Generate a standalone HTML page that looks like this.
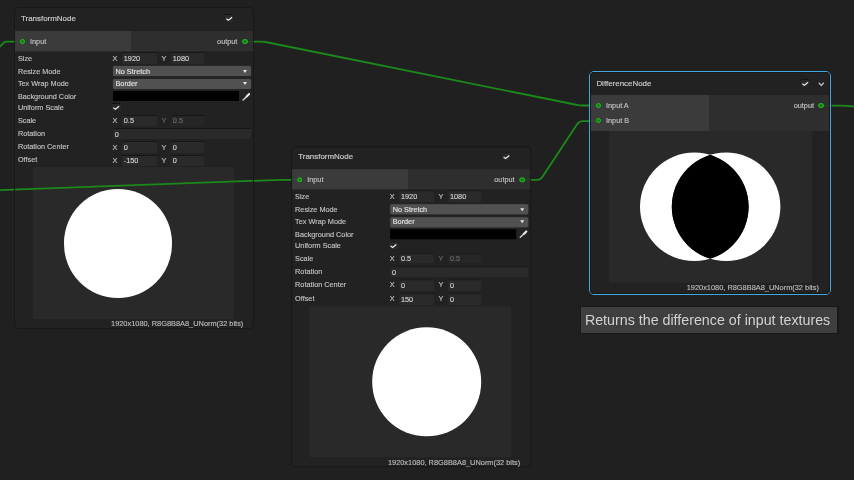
<!DOCTYPE html>
<html>
<head>
<meta charset="utf-8">
<title>Node Graph</title>
<style>
*{box-sizing:border-box;margin:0;padding:0}
html,body{width:854px;height:480px;overflow:hidden;background:#202020}
body{font-family:"Liberation Sans",sans-serif;font-size:7.3px;color:#c4c4c4;position:relative}
#stage{position:absolute;left:0;top:0;width:854px;height:480px;overflow:hidden;background:#202020;filter:blur(.3px)}
.abs{position:absolute}
svg{display:block;overflow:visible}
.t{position:absolute;white-space:nowrap;line-height:10px;height:10px}
.t,.fld,.dd{-webkit-text-stroke:.14px currentColor}
.node{position:absolute;background:#222222;border:1px solid #181818;border-radius:4px}
.wrap{position:absolute;left:0;top:0;width:0;height:0}
.title{font-size:7.95px;color:#d0d0d0}
.lbl{font-size:7.3px;color:#c2c2c2}
.dis{color:#686868}
.cap{font-size:7.4px;color:#bcbcbc}
.chk{position:absolute;width:8.5px;height:8.2px;background:#292929;border-top:1px solid #131313;border-radius:1px}
.chk svg{margin-top:-1px}
.portrow{position:absolute;left:0;right:0;height:20px;background:#2e2e2e}
.portrow .in{position:absolute;left:0;top:0;width:116px;height:100%;background:#3b3b3b}
.portsub{position:absolute;left:0;right:0;height:1px;background:#252525}
.portsub .in{position:absolute;left:0;top:0;width:116px;height:100%;background:#2d2d2d}
.dot{position:absolute;width:5.4px;height:5.4px;border-radius:50%;background:#118011;border:1.45px solid #20c220}
.fld{position:absolute;background:#2a2a2a;border-top:1px solid #161616;border-radius:1.5px;color:#d2d2d2;font-size:7.3px;line-height:10px;padding-left:1.8px;padding-top:.6px;white-space:nowrap;overflow:hidden}
.dd{position:absolute;background:#515151;border-radius:1.5px;color:#e4e4e4;font-size:7.3px;line-height:12px;padding-left:2.5px;white-space:nowrap;overflow:hidden;box-shadow:0 0 0 .6px #2c2c2c}
.dd:after{content:"";position:absolute;right:3.6px;top:var(--at,3.4px);border-left:2.4px solid transparent;border-right:2.4px solid transparent;border-top:3.4px solid #e6e6e6}
.prev{position:absolute;background:#292929;overflow:hidden}
.circ{position:absolute;border-radius:50%;background:#fff}
.tip{position:absolute;left:580.5px;top:306.5px;width:256px;height:26px;background:#3f3f3f;box-shadow:0 0 0 .9px #191919, 1.2px 0 0 .4px #141414;color:#d2d2d2;font-size:14.25px;line-height:27px;padding-left:4.4px;white-space:nowrap}
</style>
</head>
<body>
<div id="stage">
<svg class="abs" style="left:0;top:0" width="854" height="480" viewBox="0 0 854 480" fill="none" stroke="#1b891b" stroke-width="1.8" stroke-linejoin="round">
  <path d="M-2 48.4 L4.2 42.3 Q5 41.6 6.2 41.6 L14 41.6"/>
  <path d="M254 41.6 L261.5 41.6 Q263.5 41.6 265.5 42 L577.5 105 Q579.5 105.5 581.5 105.5 L589 105.5"/>
  <path d="M531 179.8 L537.5 179.8 Q540.5 179.8 542.2 177.3 L577.6 123.6 Q579.4 121.1 582.4 121.1 L589 121.1"/>
  <path d="M831.5 105.6 L840 105.7 Q847 105.9 856 106.7"/>
</svg>
<!-- TransformNode 1 -->
<div class="node" style="left:14px;top:7px;width:240px;height:321.5px;background:rgba(34,34,34,.88)">
  <div class="t title" style="left:6.0px;top:5.9px">TransformNode</div>
  <div class="chk" style="left:209.8px;top:5.8px"><svg width="8.5" height="8.2" viewBox="0 0 8.5 8.2"><path d="M1.4 4.7 L3.4 6.2 L7.1 3.2" fill="none" stroke="#ececec" stroke-width="1.25"/></svg></div>
  <div class="portrow" style="top:23px"><div class="in"></div></div>
  <div class="portsub" style="top:43px"><div class="in"></div></div>
  <div class="dot" style="left:4.7px;top:31px"></div>
  <div class="t lbl" style="left:15.0px;top:28.7px">Input</div>
  <div class="t lbl" style="right:15.6px;top:28.7px">output</div>
  <div class="dot" style="left:227.4px;top:31px"></div>
  <div class="t lbl" style="left:2.9px;top:45.7px">Size</div>
  <div class="t lbl" style="left:97.6px;top:45.7px">X</div>
  <div class="fld" style="left:107px;top:44.3px;width:35px;height:11.3px">1920</div>
  <div class="t lbl" style="left:146.4px;top:45.7px">Y</div>
  <div class="fld" style="left:156px;top:44.3px;width:33px;height:11.3px">1080</div>
  <div class="t lbl" style="left:2.9px;top:58.9px">Resize Mode</div>
  <div class="dd" style="left:98px;top:58.1px;width:138px;height:10px;--at:3.8px">No Stretch</div>
  <div class="t lbl" style="left:2.9px;top:71.4px">Tex Wrap Mode</div>
  <div class="dd" style="left:98px;top:71.2px;width:138px;height:9.5px;line-height:9px;--at:2.8px">Border</div>
  <div class="t lbl" style="left:2.9px;top:83.6px">Background Color</div>
  <div class="abs" style="left:97.5px;top:83px;width:126.3px;height:9.8px;background:#000"></div>
  <div class="abs" style="left:226.5px;top:83.5px;width:9px;height:9px"><svg width="9" height="9" viewBox="0 0 9 9"><path d="M1.1 8.0 L7.0 2.2" stroke="#cfcfcf" stroke-width="1.5" stroke-linecap="round"/><path d="M4.6 4.6 L7.1 2.1" stroke="#e4e4e4" stroke-width="2.1" stroke-linecap="round"/></svg></div>
  <div class="t lbl" style="left:2.9px;top:95.3px">Uniform Scale</div>
  <div class="chk" style="left:97.3px;top:95.3px"><svg width="8.5" height="8.2" viewBox="0 0 8.5 8.2"><path d="M1.4 4.7 L3.4 6.2 L7.1 3.2" fill="none" stroke="#ececec" stroke-width="1.25"/></svg></div>
  <div class="t lbl" style="left:2.9px;top:107.6px">Scale</div>
  <div class="t lbl" style="left:97.6px;top:107.7px">X</div>
  <div class="fld" style="left:107px;top:107.0px;width:35px;height:10.5px;padding-top:0">0.5</div>
  <div class="t lbl dis" style="left:146.4px;top:107.7px">Y</div>
  <div class="fld" style="left:156px;top:107.0px;width:33px;height:10.5px;color:#6c6c6c;background:#262626;padding-top:0">0.5</div>
  <div class="t lbl" style="left:2.9px;top:121.1px">Rotation</div>
  <div class="fld" style="left:98px;top:120.3px;width:138px;height:10.8px;padding-top:.6px">0</div>
  <div class="t lbl" style="left:2.9px;top:134.3px">Rotation Center</div>
  <div class="t lbl" style="left:97.6px;top:134.5px">X</div>
  <div class="fld" style="left:107px;top:132.9px;width:35px;height:12.1px;padding-top:1.6px">0</div>
  <div class="t lbl" style="left:146.4px;top:134.5px">Y</div>
  <div class="fld" style="left:156px;top:132.9px;width:33px;height:12.1px;padding-top:1.6px">0</div>
  <div class="t lbl" style="left:2.9px;top:147.4px">Offset</div>
  <div class="t lbl" style="left:97.6px;top:147.5px">X</div>
  <div class="fld" style="left:107px;top:146.5px;width:35px;height:11.8px">-150</div>
  <div class="t lbl" style="left:146.4px;top:147.5px">Y</div>
  <div class="fld" style="left:156px;top:146.5px;width:33px;height:11.8px">0</div>
  <div class="prev" style="left:18px;top:159.2px;width:201.4px;height:152.2px"><div class="circ" style="left:30.7px;top:21.8px;width:108.6px;height:108.6px"></div></div>
  <div class="t cap" style="right:9.7px;top:311.1px">1920x1080, R8G8B8A8_UNorm(32 bits)</div>
</div>
<svg class="abs" style="left:0;top:0" width="854" height="480" viewBox="0 0 854 480" fill="none" stroke="#1b891b" stroke-width="1.8" stroke-linejoin="round"><path d="M-2 190.2 L281 179.8 L291.4 179.8"/><path d="M14.5 180 V200 M253.5 170 V190" stroke="#181818" stroke-width="1"/></svg>
<!-- TransformNode 2 -->
<div class="wrap" style="transform:translate(277.2px,138.3px)">
<div class="node" style="left:14px;top:8.3px;width:240px;height:320.6px">
  <div class="t title" style="left:6.0px;top:5.2px">TransformNode</div>
  <div class="chk" style="left:209.8px;top:4.5px"><svg width="8.5" height="8.2" viewBox="0 0 8.5 8.2"><path d="M1.4 4.7 L3.4 6.2 L7.1 3.2" fill="none" stroke="#ececec" stroke-width="1.25"/></svg></div>
  <div class="portrow" style="top:21.7px"><div class="in"></div></div>
  <div class="portsub" style="top:41.7px"><div class="in"></div></div>
  <div class="dot" style="left:4.7px;top:29.7px"></div>
  <div class="t lbl" style="left:15.0px;top:27.4px">Input</div>
  <div class="t lbl" style="right:15.6px;top:27.4px">output</div>
  <div class="dot" style="left:227.4px;top:29.7px"></div>
  <div class="t lbl" style="left:2.9px;top:44.4px">Size</div>
  <div class="t lbl" style="left:97.6px;top:44.4px">X</div>
  <div class="fld" style="left:107px;top:43.0px;width:35px;height:11.3px">1920</div>
  <div class="t lbl" style="left:146.4px;top:44.4px">Y</div>
  <div class="fld" style="left:156px;top:43.0px;width:33px;height:11.3px">1080</div>
  <div class="t lbl" style="left:2.9px;top:57.6px">Resize Mode</div>
  <div class="dd" style="left:98px;top:56.8px;width:138px;height:10px;--at:3.8px">No Stretch</div>
  <div class="t lbl" style="left:2.9px;top:70.1px">Tex Wrap Mode</div>
  <div class="dd" style="left:98px;top:69.9px;width:138px;height:9.5px;line-height:9px;--at:2.8px">Border</div>
  <div class="t lbl" style="left:2.9px;top:82.3px">Background Color</div>
  <div class="abs" style="left:97.5px;top:81.7px;width:126.3px;height:9.8px;background:#000"></div>
  <div class="abs" style="left:226.5px;top:82.2px;width:9px;height:9px"><svg width="9" height="9" viewBox="0 0 9 9"><path d="M1.1 8.0 L7.0 2.2" stroke="#cfcfcf" stroke-width="1.5" stroke-linecap="round"/><path d="M4.6 4.6 L7.1 2.1" stroke="#e4e4e4" stroke-width="2.1" stroke-linecap="round"/></svg></div>
  <div class="t lbl" style="left:2.9px;top:94.0px">Uniform Scale</div>
  <div class="chk" style="left:97.3px;top:94.0px"><svg width="8.5" height="8.2" viewBox="0 0 8.5 8.2"><path d="M1.4 4.7 L3.4 6.2 L7.1 3.2" fill="none" stroke="#ececec" stroke-width="1.25"/></svg></div>
  <div class="t lbl" style="left:2.9px;top:106.3px">Scale</div>
  <div class="t lbl" style="left:97.6px;top:106.4px">X</div>
  <div class="fld" style="left:107px;top:105.7px;width:35px;height:10.5px;padding-top:0">0.5</div>
  <div class="t lbl dis" style="left:146.4px;top:106.4px">Y</div>
  <div class="fld" style="left:156px;top:105.7px;width:33px;height:10.5px;color:#6c6c6c;background:#262626;padding-top:0">0.5</div>
  <div class="t lbl" style="left:2.9px;top:119.8px">Rotation</div>
  <div class="fld" style="left:98px;top:119.0px;width:138px;height:10.8px;padding-top:.6px">0</div>
  <div class="t lbl" style="left:2.9px;top:133.0px">Rotation Center</div>
  <div class="t lbl" style="left:97.6px;top:133.2px">X</div>
  <div class="fld" style="left:107px;top:131.6px;width:35px;height:12.1px;padding-top:1.6px">0</div>
  <div class="t lbl" style="left:146.4px;top:133.2px">Y</div>
  <div class="fld" style="left:156px;top:131.6px;width:33px;height:12.1px;padding-top:1.6px">0</div>
  <div class="t lbl" style="left:2.9px;top:146.6px">Offset</div>
  <div class="t lbl" style="left:97.6px;top:146.7px">X</div>
  <div class="fld" style="left:107px;top:145.7px;width:35px;height:11.8px">150</div>
  <div class="t lbl" style="left:146.4px;top:146.7px">Y</div>
  <div class="fld" style="left:156px;top:145.7px;width:33px;height:11.8px">0</div>
  <div class="prev" style="left:16.9px;top:158.6px;width:202.5px;height:151.6px"><div class="circ" style="left:63.3px;top:21.3px;width:108.6px;height:108.6px"></div></div>
  <div class="t cap" style="right:10.0px;top:310.5px">1920x1080, R8G8B8A8_UNorm(32 bits)</div>
</div>
</div>
<!-- DifferenceNode -->
<div class="abs" style="left:588.7px;top:70.5px;width:242.6px;height:224.3px;border:1.3px solid #46a6de;border-radius:5px"></div>
<div class="node" style="left:590px;top:72px;width:240px;height:221.5px;border-radius:3.5px">
  <div class="t title" style="left:5.4px;top:6.1px">DifferenceNode</div>
  <div class="chk" style="left:209.9px;top:5.8px"><svg width="8.5" height="8.2" viewBox="0 0 8.5 8.2"><path d="M1.4 4.7 L3.4 6.2 L7.1 3.2" fill="none" stroke="#ececec" stroke-width="1.25"/></svg></div>
  <svg class="abs" style="left:227.3px;top:9px" width="7" height="5" viewBox="0 0 7 5"><path d="M0.8 0.8 L3.3 3.5 L5.8 0.8" fill="none" stroke="#bcbcbc" stroke-width="1.3"/></svg>
  <div class="portrow" style="top:22.4px;height:35.2px"><div class="in" style="width:118.3px"></div></div>
  <div class="dot" style="left:4.6px;top:29.9px"></div>
  <div class="dot" style="left:4.6px;top:45px"></div>
  <div class="t lbl" style="left:15.0px;top:27.5px">Input A</div>
  <div class="t lbl" style="left:15.0px;top:42.6px">Input B</div>
  <div class="t lbl" style="right:15px;top:27.5px">output</div>
  <div class="dot" style="left:227.3px;top:29.9px"></div>
  <svg class="abs" style="left:17.7px;top:58.2px" width="202.8" height="151.9" viewBox="0 0 202.8 151.9"><rect width="202.8" height="151.9" fill="#292929"/><path fill="#fff" fill-rule="evenodd" d="M31.00 75.80a54.3 54.3 0 1 0 108.6 0a54.3 54.3 0 1 0 -108.6 0ZM62.80 75.80a54.3 54.3 0 1 0 108.6 0a54.3 54.3 0 1 0 -108.6 0Z"/><clipPath id="cl"><circle cx="85.30" cy="75.80" r="54.3"/></clipPath><circle cx="117.10" cy="75.80" r="54.3" fill="#000" clip-path="url(#cl)"/></svg>
  <div class="t cap" style="right:10px;top:210.1px">1920x1080, R8G8B8A8_UNorm(32 bits)</div>
</div>
<svg class="abs" style="left:0;top:0" width="854" height="480" viewBox="0 0 854 480" fill="none" stroke="#1b891b"><g stroke-width="1.1" opacity=".3"><path d="M14 41.6 L20 41.6"/><path d="M248 41.6 L254 41.6"/><path d="M291.4 179.8 L297 179.8"/><path d="M525.3 179.8 L531 179.8"/><path d="M590.5 105.5 L596 105.5"/><path d="M590.5 121.1 L596 121.1"/><path d="M824 105.6 L830 105.6"/></g></svg>
<div class="tip">Returns the difference of input textures</div>
</div>
</body>
</html>
